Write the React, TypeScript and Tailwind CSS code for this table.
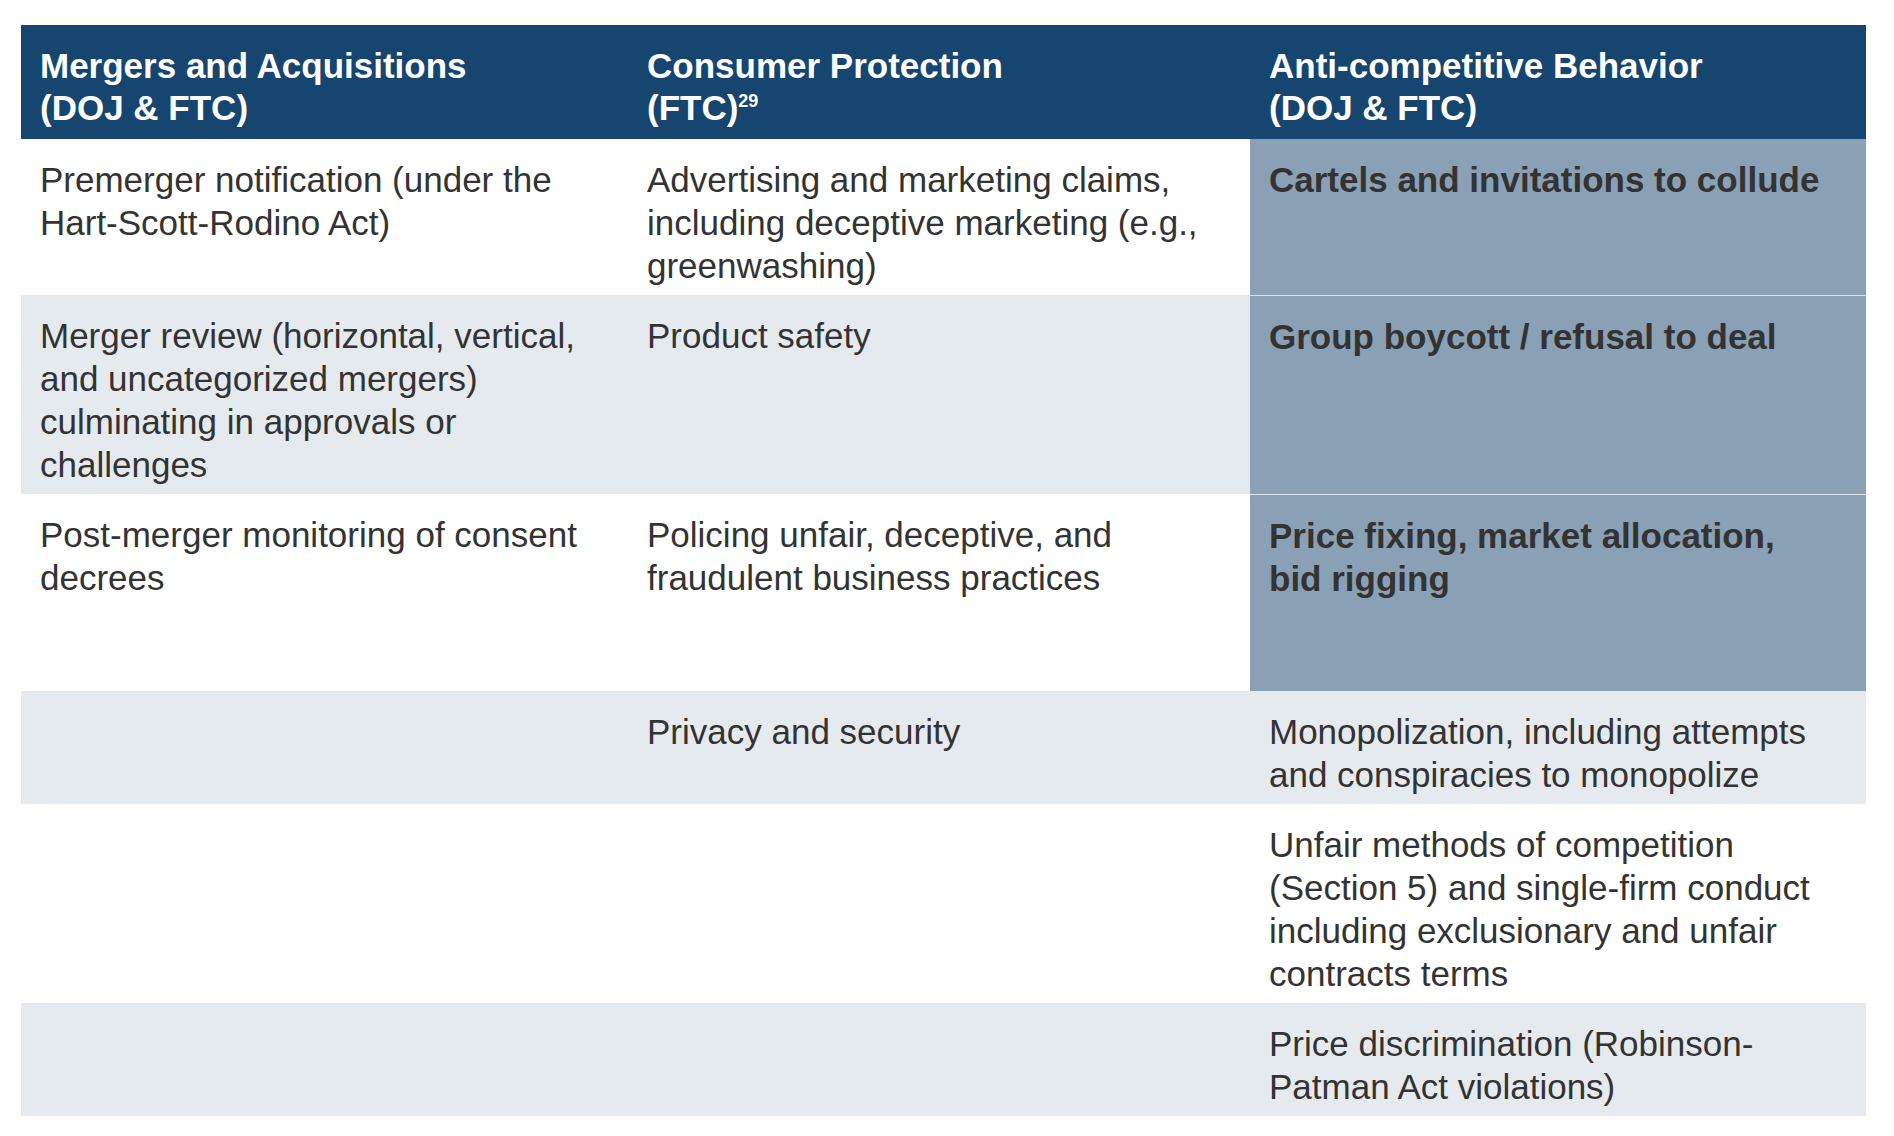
import React from "react";

type Cell = { text?: string; bold?: boolean; hl?: boolean; sep?: boolean };
type Row = { bg: string; cells: Cell[]; minH?: string };

const rows: Row[] = [
  {
    bg: "bg-white",
    cells: [
      { text: "Premerger notification (under the Hart-Scott-Rodino Act)" },
      { text: "Advertising and marketing claims, including deceptive marketing (e.g., greenwashing)" },
      { text: "Cartels and invitations to collude", bold: true, hl: true },
    ],
  },
  {
    bg: "bg-[#e5eaef]",
    cells: [
      { text: "Merger review (horizontal, vertical, and uncategorized mergers) culminating in approvals or challenges" },
      { text: "Product safety" },
      { text: "Group boycott / refusal to deal", bold: true, hl: true, sep: true },
    ],
  },
  {
    bg: "bg-white",
    minH: "min-h-[197px]",
    cells: [
      { text: "Post-merger monitoring of consent decrees" },
      { text: "Policing unfair, deceptive, and fraudulent business practices" },
      { text: "Price fixing, market allocation, bid rigging", bold: true, hl: true, sep: true },
    ],
  },
  {
    bg: "bg-[#e5eaef]",
    cells: [
      {},
      { text: "Privacy and security" },
      { text: "Monopolization, including attempts and conspiracies to monopolize" },
    ],
  },
  {
    bg: "bg-white",
    cells: [
      {},
      {},
      { text: "Unfair methods of competition (Section 5) and single-firm conduct including exclusionary and unfair contracts terms" },
    ],
  },
  {
    bg: "bg-[#e5eaef]",
    cells: [{}, {}, { text: "Price discrimination (Robinson-Patman Act violations)" }],
  },
];

const padR = ["pr-[19px]", "pr-[19px]", "pr-[35px]"];

export default function App() {
  return (
    <div
      className="min-h-[1136px] w-[1894px] bg-white pl-[21px] pt-[25px]"
      style={{ fontFamily: '"Liberation Sans", Arial, Helvetica, sans-serif' }}
    >
      <div className="w-[1845px]">
        <div className="grid grid-cols-[607px_622px_616px] bg-[#16456f] text-white">
          <div className="pl-[19px] pr-[19px] pt-[20px] pb-[10px] text-[35px] font-bold leading-[42px]">
            <div>Mergers and Acquisitions</div>
            <div>(DOJ &amp; FTC)</div>
          </div>
          <div className="pl-[19px] pr-[19px] pt-[20px] pb-[10px] text-[35px] font-bold leading-[42px]">
            <div>Consumer Protection</div>
            <div>
              (FTC)<sup className="-top-[13px] text-[18px] leading-none">29</sup>
            </div>
          </div>
          <div className="pl-[19px] pr-[19px] pt-[20px] pb-[10px] text-[35px] font-bold leading-[42px]">
            <div>Anti-competitive Behavior</div>
            <div>(DOJ &amp; FTC)</div>
          </div>
        </div>
        {rows.map((r, i) => (
          <div key={i} className={`grid grid-cols-[607px_622px_616px] ${r.bg} ${r.minH ?? ""}`}>
            {r.cells.map((c, j) => (
              <div
                key={j}
                className={`pl-[19px] ${padR[j]} pt-[19px] pb-[8px] text-[35px] leading-[43px] text-[#333333] ${
                  c.hl ? "bg-[#89a0b5]" : ""
                } ${c.sep ? "border-t border-[#dde4eb]" : ""} ${c.bold ? "font-bold" : ""}`}
              >
                {c.text}
              </div>
            ))}
          </div>
        ))}
      </div>
    </div>
  );
}
